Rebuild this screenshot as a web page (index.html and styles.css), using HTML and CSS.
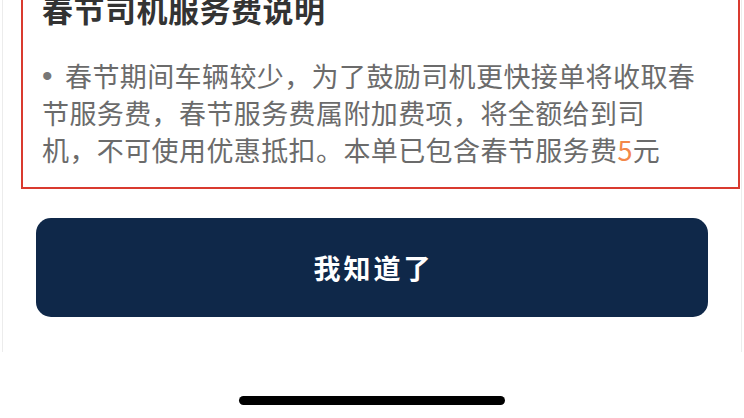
FILE: index.html
```html
<!DOCTYPE html>
<html lang="zh-CN">
<head>
<meta charset="utf-8">
<title>春节司机服务费说明</title>
<link rel="stylesheet" href="styles.css">
</head>
<body>
<div class="page">
  <div class="sheet">
    <section class="notice">
      <h2 class="notice-title">春节司机服务费说明</h2>
      <p class="notice-text"><span class="bullet">•</span>春节期间车辆较少，为了鼓励司机更快接单将收取春<br>节服务费，春节服务费属附加费项，将全额给到司<br>机，不可使用优惠抵扣。本单已包含春节服务费<span class="amount">5</span>元</p>
    </section>
    <button class="confirm" type="button">我知道了</button>
  </div>
  <div class="home-indicator"></div>
</div>
</body>
</html>
```

FILE: styles.css
```css
html, body {
  margin: 0;
  padding: 0;
  background: #fff;
}

body {
  font-family: "Noto Sans CJK SC", "Noto Sans", sans-serif;
  overflow: hidden;
}

.page {
  height: 418px;
  display: flex;
  flex-direction: column;
  align-items: stretch;
}

.sheet {
  margin: -33px 2px 0 2px;
  border-left: 1px solid #ececec;
  border-right: 1px solid #ececec;
  padding: 0 0 35px;
  display: flex;
  flex-direction: column;
  align-items: center;
  background: #fff;
}

.notice {
  align-self: stretch;
  margin: 0 1px 0 18px;
  border: 2px solid #d93a2f;
  padding: 20px 10px 19px 19px;
}

.notice-title {
  margin: 0;
  font-size: 31px;
  line-height: 40px;
  font-weight: 700;
  letter-spacing: 0.5px;
  color: #333;
}

.notice-text {
  margin: 28px 0 0;
  font-size: 27px;
  line-height: 37px;
  letter-spacing: 0.4px;
  color: #6b6b6b;
  white-space: nowrap;
}

/* list dot in front of the paragraph, kept inside the text line box */
.bullet {
  display: inline-block;
  width: 23px;
  height: 37px;
  line-height: 37px;
  vertical-align: top;
  font-family: "Liberation Sans", sans-serif;
  font-size: 30px;
  color: #777;
}

.amount {
  color: #f3874a;
}

.confirm {
  margin-top: 29px;
  width: 672px;
  height: 99px;
  border: none;
  border-radius: 15px;
  background: #0f2849;
  color: #fff;
  font-family: inherit;
  font-size: 27px;
  font-weight: 700;
  letter-spacing: 3px;
  padding: 0 0 0 3px;
}

.home-indicator {
  align-self: center;
  margin-top: 44px;
  width: 266px;
  height: 9px;
  border-radius: 5px;
  background: #000;
}
```
